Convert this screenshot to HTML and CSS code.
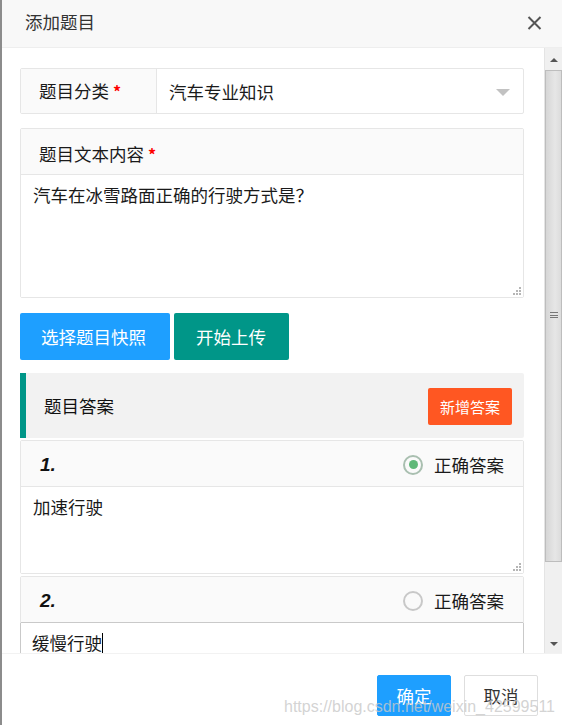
FILE: index.html
```html
<!DOCTYPE html>
<html lang="zh-CN">
<head>
<meta charset="utf-8">
<title>添加题目</title>
<link rel="stylesheet" href="styles.css">
</head>
<body>
<div class="dialog">
  <div class="dlg-head">
    <span class="dlg-title">添加题目</span>
    <span class="dlg-close"><svg width="15" height="14" viewBox="0 0 15 14"><path d="M1.5 1 L13.5 13 M13.5 1 L1.5 13" stroke="#555" stroke-width="2" fill="none"/></svg></span>
  </div>
  <div class="dlg-body">
    <div class="dlg-scroll">
      <div class="select-row">
        <div class="row-label">题目分类 <i class="req">*</i></div>
        <div class="select-box"><span>汽车专业知识</span><span class="caret"></span></div>
      </div>
      <div class="text-block">
        <div class="block-label">题目文本内容 <i class="req">*</i></div>
        <div class="text-area tall">汽车在冰雪路面正确的行驶方式是？
          <svg class="grip" width="10" height="10" viewBox="0 0 10 10"><g fill="#b5b5b5"><rect x="8" y="2" width="2" height="2"/><rect x="5" y="5" width="2" height="2"/><rect x="8" y="5" width="2" height="2"/><rect x="2" y="8" width="2" height="2"/><rect x="5" y="8" width="2" height="2"/><rect x="8" y="8" width="2" height="2"/></g></svg>
        </div>
      </div>
      <div class="btn-row">
        <span class="btn btn-blue">选择题目快照</span>
        <span class="btn btn-teal">开始上传</span>
      </div>
      <div class="answers-head">
        <span class="answers-title">题目答案</span>
        <span class="btn-sm btn-orange">新增答案</span>
      </div>
      <div class="answer">
        <div class="answer-head">
          <span class="answer-no">1.</span>
          <span class="answer-check"><span class="radio checked"></span>正确答案</span>
        </div>
        <div class="text-area short">加速行驶
          <svg class="grip" width="10" height="10" viewBox="0 0 10 10"><g fill="#b5b5b5"><rect x="8" y="2" width="2" height="2"/><rect x="5" y="5" width="2" height="2"/><rect x="8" y="5" width="2" height="2"/><rect x="2" y="8" width="2" height="2"/><rect x="5" y="8" width="2" height="2"/><rect x="8" y="8" width="2" height="2"/></g></svg>
        </div>
      </div>
      <div class="answer focus">
        <div class="answer-head">
          <span class="answer-no">2.</span>
          <span class="answer-check"><span class="radio"></span>正确答案</span>
        </div>
        <div class="text-area short">缓慢行驶<span class="caret-line"></span></div>
      </div>
    </div>
    <div class="scrollbar">
      <div class="sb-btn"><span class="tri-up"></span></div>
      <div class="sb-thumb"><span class="grip-lines"></span></div>
      <div class="sb-track"></div>
      <div class="sb-btn"><span class="tri-down"></span></div>
    </div>
  </div>
  <div class="dlg-foot">
    <span class="fbtn fbtn-ok">确定</span>
    <span class="fbtn fbtn-cancel">取消</span>
    <span class="watermark">https://blog.csdn.net/weixin_42599511</span>
  </div>
</div>
</body>
</html>
```

FILE: styles.css
```css
* { box-sizing: border-box; }
html, body { margin: 0; padding: 0; }
body {
  font-family: "Noto Sans CJK SC", "Microsoft YaHei", sans-serif;
  color: #333;
  background: #fff;
  width: 562px;
  height: 725px;
  overflow: hidden;
}
.dialog {
  display: flex;
  flex-direction: column;
  height: 725px;
  border-left: 2px solid #8c8c8c;
}
.dlg-head {
  height: 48px;
  flex: none;
  background: #f8f8f8;
  border-bottom: 1px solid #eee;
  display: flex;
  align-items: center;
  justify-content: space-between;
  padding: 0 20px 4px 23px;
}
.dlg-title { font-size: 17.5px; color: #333; line-height: 24px; }
.dlg-close { display: flex; align-items: center; margin-top: 2px; }

.dlg-body {
  height: 605px;
  flex: none;
  display: flex;
}
.dlg-scroll {
  flex: 1;
  overflow: hidden;
  padding: 20px 20px 0 18px;
  display: flex;
  flex-direction: column;
}
.select-row {
  height: 46px;
  flex: none;
  display: flex;
  border: 1px solid #e6e6e6;
  border-radius: 2px;
}
.row-label {
  width: 136px;
  background: #fafafa;
  border-right: 1px solid #e6e6e6;
  font-size: 17.5px;
  line-height: 44px;
  padding-left: 18px;
  color: #1a1a1a;
}
.req { color: #f00; font-style: normal; font-weight: bold; font-size: 16px; }
.select-box {
  flex: 1;
  display: flex;
  align-items: center;
  justify-content: space-between;
  padding: 0 13px 0 12px;
  font-size: 17.5px;
  color: #1a1a1a;
}
.caret {
  width: 0; height: 0;
  border-left: 7px solid transparent;
  border-right: 7px solid transparent;
  border-top: 7px solid #c2c2c2;
  margin-top: 2px;
}
.text-block {
  margin-top: 14px;
  border: 1px solid #e6e6e6;
  border-radius: 2px;
  flex: none;
}
.block-label {
  height: 46px;
  background: #fafafa;
  border-bottom: 1px solid #e6e6e6;
  font-size: 17.5px;
  line-height: 50px;
  padding-left: 18px;
  color: #1a1a1a;
}
.text-area {
  position: relative;
  font-size: 17.5px;
  line-height: 20px;
  padding: 10px 12px;
  color: #1a1a1a;
  background: #fff;
}
.text-area.tall { height: 122px; }
.text-area.short { height: 86px; }
.grip { position: absolute; right: 2px; bottom: 2px; }

.btn-row {
  margin-top: 15px;
  display: flex;
  gap: 4px;
  flex: none;
}
.btn {
  height: 47px;
  line-height: 47px;
  color: #fff;
  font-size: 17.5px;
  border-radius: 2px;
  padding: 0 20px;
}
.btn-blue { background: #1e9fff; width: 150px; padding: 0 0 0 21px; }
.btn-teal { background: #009688; width: 115px; padding: 0 0 0 22px; }

.answers-head {
  margin-top: 13px;
  height: 65px;
  flex: none;
  background: #f2f2f2;
  border-left: 6px solid #009688;
  border-radius: 0 2px 2px 0;
  display: flex;
  align-items: center;
  justify-content: space-between;
  padding: 0 12px 0 18px;
}
.answers-title { font-size: 17.5px; color: #111; }
.btn-sm {
  height: 37px;
  line-height: 37px;
  padding: 0 12px;
  font-size: 15px;
  color: #fff;
  border-radius: 2px;
  margin-top: 1px;
}
.btn-orange { background: #ff5722; }

.answer {
  margin-top: 2px;
  border: 1px solid #e6e6e6;
  border-radius: 2px;
  flex: none;
}
.answer-head {
  height: 46px;
  background: #fafafa;
  border-bottom: 1px solid #e6e6e6;
  display: flex;
  align-items: center;
  justify-content: space-between;
  padding: 2px 19px 0 19px;
}
.answer-no {
  font-family: "Liberation Sans", Arial, sans-serif;
  font-weight: bold;
  font-style: italic;
  font-size: 19px;
  color: #111;
}
.answer-check {
  display: flex;
  align-items: center;
  font-size: 17.5px;
  color: #1a1a1a;
  gap: 11px;
}
.radio {
  width: 20px; height: 20px;
  border-radius: 50%;
  border: 2px solid #c8c8c8;
  display: flex;
  align-items: center;
  justify-content: center;
}
.radio.checked { border-color: #a9bfb0; }
.radio.checked::after {
  content: "";
  width: 9px; height: 9px;
  border-radius: 50%;
  background: #5fb878;
}
.answer.focus .answer-head { border-bottom-color: #c9c9c9; }
.answer.focus .text-area { box-shadow: inset 1px 0 #c9c9c9, inset -1px 0 #c9c9c9; margin: 0 -1px; }
.caret-line {
  display: inline-block;
  width: 1px;
  height: 20px;
  background: #000;
  vertical-align: top;
}

.scrollbar {
  width: 18px;
  flex: none;
  display: flex;
  flex-direction: column;
  background: #f0f0f0;
  border-left: 1px solid #e4e4e4;
}
.sb-btn {
  height: 19px;
  flex: none;
  display: flex;
  align-items: center;
  justify-content: center;
}
.tri-up {
  width: 0; height: 0;
  border-left: 4px solid transparent;
  border-right: 4px solid transparent;
  border-bottom: 4px solid #555;
  margin-top: 5px;
}
.tri-down {
  width: 0; height: 0;
  border-left: 4px solid transparent;
  border-right: 4px solid transparent;
  border-top: 4px solid #555;
}
.sb-thumb {
  margin-top: 3px;
  height: 492px;
  flex: none;
  background: linear-gradient(to right, #d6d6d6, #e6e6e6 60%, #dcdcdc);
  border: 1px solid #bdbdbd;
  display: flex;
  align-items: center;
  justify-content: center;
}
.grip-lines {
  width: 8px;
  height: 8px;
  background: repeating-linear-gradient(to bottom, #777 0 1px, transparent 1px 2.5px);
}
.sb-track { flex: 1; }

.dlg-foot {
  flex: 1;
  position: relative;
  display: flex;
  justify-content: flex-end;
  align-items: flex-start;
  gap: 13px;
  padding: 21px 24px 0 0;
  border-top: 1px solid #f2f2f2;
}
.fbtn {
  width: 74px;
  height: 41px;
  line-height: 39px;
  text-align: center;
  font-size: 17.5px;
  border-radius: 2px;
  border: 1px solid transparent;
}
.fbtn-ok { background: #1e9fff; color: #fff; border-color: #1e9fff; }
.fbtn-cancel { background: #fff; color: #333; border-color: #dedede; }
.watermark {
  position: absolute;
  left: 282px;
  top: 44px;
  font-family: "Liberation Sans", Arial, sans-serif;
  font-size: 16px;
  color: rgba(200, 200, 200, 0.8);
  white-space: nowrap;
}
```
